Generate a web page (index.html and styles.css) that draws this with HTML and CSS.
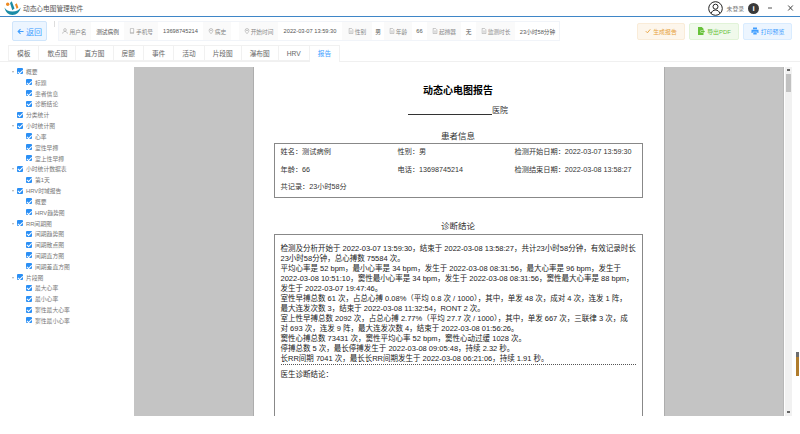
FILE: index.html
```html
<!DOCTYPE html>
<html lang="zh">
<head>
<meta charset="utf-8">
<title>动态心电图管理软件</title>
<link rel="stylesheet" href="styles.css">
</head>
<body>
<svg class="defs" width="0" height="0" aria-hidden="true">
  <symbol id="i-user" viewBox="0 0 8 8"><circle cx="4" cy="2.600" r="1.800" fill="none" stroke="#999" stroke-width=".7"/><path d="M.8 7.500c.3-2 1.600-2.900 3.200-2.900s2.900.9 3.200 2.900" fill="none" stroke="#999" stroke-width=".7"/></symbol>
  <symbol id="i-phone" viewBox="0 0 8 8"><rect x="1.800" y=".5" width="4.400" height="7" rx=".7" fill="none" stroke="#999" stroke-width=".7"/><path d="M1.800 6h4.400" stroke="#999" stroke-width=".6"/></symbol>
  <symbol id="i-pin" viewBox="0 0 8 8"><path d="M4 7.600C2.400 5.800 1.500 4.600 1.500 3.200a2.500 2.500 0 0 1 5 0C6.500 4.600 5.600 5.800 4 7.600z" fill="none" stroke="#999" stroke-width=".7"/><circle cx="4" cy="3.200" r=".8" fill="#999"/></symbol>
  <symbol id="i-doc" viewBox="0 0 8 8"><path d="M1.500.6h3.300l1.700 1.700v5.100h-5z" fill="none" stroke="#999" stroke-width=".7"/><path d="M2.800 4h2.400M2.800 5.500h2.400" stroke="#999" stroke-width=".6"/></symbol>
</svg>
<div class="app">
  <header class="titlebar">
    <div class="brand">
      <svg class="logo" viewBox="0 0 18 16" width="18" height="16"><path d="M.5 7.500c.7 4.500 4 7.500 8 7.500s7.500-3 8.200-7.500c-1.600 2.700-4.200 4-8.200 4s-6.500-1.300-8-4z" fill="#1b8ca6"/><circle cx="3.700" cy="4.300" r="1.700" fill="#ee8a22"/><path d="M7.800 1.200l2.700 7.400-2.200 1.600L6 3z" fill="#1b8ca6"/><path d="M12.800 3.200l1.600 4.400-1.700 1.500-1.700-4.600z" fill="#ee8a22"/></svg>
      <span class="app-name">动态心电图管理软件</span>
    </div>
    <div class="user">
      <svg class="avatar" viewBox="0 0 15 15" width="15" height="15"><circle cx="7.500" cy="7.500" r="6.800" fill="none" stroke="#222" stroke-width="1"/><circle cx="7.500" cy="5.700" r="2.500" fill="none" stroke="#222" stroke-width="1"/><path d="M3.200 12.400c.7-2.400 2.300-3.300 4.300-3.300s3.600.9 4.300 3.300" fill="none" stroke="#222" stroke-width="1"/></svg>
      <span class="login">未登录</span>
      <span class="info">i</span>
      <svg class="winbtn" viewBox="0 0 20 8" width="20" height="8"><path d="M8 4h4" stroke="#555" stroke-width="1"/></svg>
      <svg class="winbtn" viewBox="0 0 20 8" width="20" height="8"><path d="M8.200 1.500l4.600 5M12.800 1.500l-4.600 5" stroke="#444" stroke-width="1"/></svg>
    </div>
  </header>

  <div class="toolbar">
    <button class="back"><svg viewBox="0 0 8 8" width="7" height="7"><path d="M7.500 4H1.500M4 1.300L1.300 4 4 6.700" fill="none" stroke="#409eff" stroke-width="1.300"/></svg>返回</button>
    <span class="sep"></span>
    <div class="desc">
      <span class="k"><svg class="ico"><use href="#i-user"/></svg>用户名</span><span class="v">测试病例</span>
      <span class="k"><svg class="ico"><use href="#i-phone"/></svg>手机号</span><span class="v">13698745214</span>
      <span class="k"><svg class="ico"><use href="#i-pin"/></svg>病史</span><span class="v"></span>
      <span class="k"><svg class="ico"><use href="#i-pin"/></svg>开始时间</span><span class="v">2022-03-07 13:59:30</span>
      <span class="k"><svg class="ico"><use href="#i-doc"/></svg>性别</span><span class="v">男</span>
      <span class="k"><svg class="ico"><use href="#i-doc"/></svg>年龄</span><span class="v">66</span>
      <span class="k"><svg class="ico"><use href="#i-doc"/></svg>起搏器</span><span class="v">无</span>
      <span class="k"><svg class="ico"><use href="#i-doc"/></svg>监测时长</span><span class="v">23小时58分钟</span>
    </div>
    <div class="actions">
      <button class="act orange"><svg viewBox="0 0 8 8" width="6" height="6"><path d="M1 4.200l2.200 2.200L7 1.800" fill="none" stroke="#e6a23c" stroke-width="1.200"/></svg>生成报告</button>
      <button class="act green"><svg viewBox="0 0 8 8" width="8" height="8"><path d="M1 0h3.800L6.500 1.800V3.500H3.500v2h3V8H1z" fill="#67c23a"/><path d="M4 4.100h2.300V3L8 4.500 6.300 6V4.900H4z" fill="#67c23a"/></svg>导出PDF</button>
      <button class="act blue"><svg viewBox="0 0 8 8" width="8" height="8"><path d="M2 .5h4v1.800H2zM.5 2.800h7v3.200H6.300V4.800H1.700V6H.5zM2.300 5.300h3.400v2.300H2.300z" fill="#409eff"/></svg>打印预览</button>
    </div>
  </div>

  <nav class="tabs">
    <span class="tab">模板</span><span class="tab">散点图</span><span class="tab">直方图</span><span class="tab">房颤</span><span class="tab">事件</span><span class="tab">活动</span><span class="tab">片段图</span><span class="tab">瀑布图</span><span class="tab">HRV</span><span class="tab active">报告</span>
  </nav>

  <main class="body">
    <aside class="tree">
      <div class="node"><i class="caret"></i><i class="cb"></i>概要</div>
      <div class="node sub"><i class="cb"></i>标题</div>
      <div class="node sub"><i class="cb"></i>患者信息</div>
      <div class="node sub"><i class="cb"></i>诊断结论</div>
      <div class="node"><i class="caret none"></i><i class="cb"></i>分类统计</div>
      <div class="node"><i class="caret"></i><i class="cb"></i>小时统计图</div>
      <div class="node sub"><i class="cb"></i>心率</div>
      <div class="node sub"><i class="cb"></i>室性早搏</div>
      <div class="node sub"><i class="cb"></i>室上性早搏</div>
      <div class="node"><i class="caret"></i><i class="cb"></i>小时统计数据表</div>
      <div class="node sub"><i class="cb"></i>第1天</div>
      <div class="node"><i class="caret"></i><i class="cb"></i>HRV时域报告</div>
      <div class="node sub"><i class="cb"></i>概要</div>
      <div class="node sub"><i class="cb"></i>HRV趋势图</div>
      <div class="node"><i class="caret"></i><i class="cb"></i>RR间期图</div>
      <div class="node sub"><i class="cb"></i>间期趋势图</div>
      <div class="node sub"><i class="cb"></i>间期散点图</div>
      <div class="node sub"><i class="cb"></i>间期直方图</div>
      <div class="node sub"><i class="cb"></i>间期差直方图</div>
      <div class="node"><i class="caret"></i><i class="cb"></i>片段图</div>
      <div class="node sub"><i class="cb"></i>最大心率</div>
      <div class="node sub"><i class="cb"></i>最小心率</div>
      <div class="node sub"><i class="cb"></i>窦性最大心率</div>
      <div class="node sub"><i class="cb"></i>窦性最小心率</div>
    </aside>

    <section class="viewer">
      <article class="page">
        <h1>动态心电图报告</h1>
        <p class="hospital"><span class="blank-line"></span>医院</p>
        <h2 class="first">患者信息</h2>
        <div class="patient">
          <span>姓名：测试病例</span><span>性别：男</span><span>检测开始日期：2022-03-07 13:59:30</span>
          <span>年龄：66</span><span>电话：13698745214</span><span>检测结束日期：2022-03-08 13:58:27</span>
          <span>共记录：23小时58分</span>
        </div>
        <h2 class="second">诊断结论</h2>
        <div class="conclusion">
          <div class="auto">检测及分析开始于 2022-03-07 13:59:30，结束于 2022-03-08 13:58:27，共计23小时58分钟，有效记录时长<br>
23小时58分钟，总心搏数 75584 次。<br>
平均心率是 52 bpm，最小心率是 34 bpm，发生于 2022-03-08 08:31:56，最大心率是 96 bpm，发生于<br>
2022-03-08 10:51:10，窦性最小心率是 34 bpm，发生于 2022-03-08 08:31:56，窦性最大心率是 88 bpm，<br>
发生于 2022-03-07 19:47:46。<br>
室性早搏总数 61 次，占总心搏 0.08%（平均 0.8 次 / 1000），其中，单发 48 次，成对 4 次，连发 1 阵，<br>
最大连发次数 3，结束于 2022-03-08 11:32:54，RONT 2 次。<br>
室上性早搏总数 2092 次，占总心搏 2.77%（平均 27.7 次 / 1000），其中，单发 667 次，三联律 3 次，成<br>
对 693 次，连发 9 阵，最大连发次数 4，结束于 2022-03-08 01:56:26。<br>
窦性心搏总数 73431 次，窦性平均心率 52 bpm，窦性心动过缓 1028 次。<br>
停搏总数 5 次，最长停搏发生于 2022-03-08 09:05:48，持续 2.32 秒。<br>
长RR间期 7041 次，最长长RR间期发生于 2022-03-08 06:21:06，持续 1.91 秒。</div>
          <div class="doctor">医生诊断结论：</div>
        </div>
      </article>
    </section>
    <div class="vscroll"><span class="up"></span><span class="thumb"></span><span class="down"></span></div>
    <div class="marker-track"><span class="marker"></span></div>
  </main>
</div>
</body>
</html>
```
FILE: styles.css
```css
* { box-sizing: border-box; }
html, body { margin: 0; height: 100%; }
body { background: #fff; font-family: "Liberation Sans", "Noto Sans CJK SC", sans-serif; color: #606266; font-size: 7px; overflow: hidden; }
.defs { position: absolute; }
.app { width: 800px; height: 434px; display: flex; flex-direction: column; }
.titlebar { height: 17px; flex: none; border-bottom: 1px solid #3f86c7; display: flex; justify-content: space-between; align-items: center; }
.brand { display: flex; align-items: center; gap: 1px; padding-left: 4px; }
.app-name { font-size: 6.700px; color: #555; }
.user { display: flex; align-items: center; }
.avatar { margin-right: 4px; }
.login { font-size: 5.800px; color: #777; margin-right: 4px; }
.info { width: 11px; height: 11px; border-radius: 50%; background: #3a3a3a; color: #fff; font-weight: bold; font-size: 8px; text-align: center; line-height: 11px; margin-right: 1px; }
.toolbar { height: 28px; flex: none; display: flex; align-items: center; padding: 0 8px 0 12px; }
button { font-family: inherit; cursor: pointer; }
.back { width: 35px; height: 20px; border: 1px solid #cfe5fb; background: #ecf5ff; color: #409eff; border-radius: 2px; font-size: 8px; padding: 0; display: flex; align-items: center; justify-content: center; gap: 2px; }
.sep { width: 1px; height: 6px; background: #ddd; margin: -14px 3px 0 7px; }
.desc { display: grid; grid-template-columns: 33px 33px 34px 45px 28px 8px 39px 64px 30px 12px 28px 15px 34px 15px 39px 45px; height: 20px; outline: 1px solid #f1f4f9; outline-offset: -1px; font-size: 5.700px; color: #555; }
.k, .v { display: flex; align-items: center; justify-content: center; white-space: nowrap; }
.k { background: #fafafa; color: #888; gap: 1px; }
.ico { width: 6px; height: 6px; flex: none; }
.actions { display: flex; gap: 4px; margin-left: auto; }
.act { height: 17px; border-radius: 2px; font-size: 5.900px; padding: 0; display: flex; align-items: center; justify-content: center; gap: 2px; }
.orange { width: 48px; background: #fdf6ec; border: 1px solid #faecd8; color: #e6a23c; }
.green { width: 50px; background: #f0f9eb; border: 1px solid #e1f3d8; color: #67c23a; }
.blue { width: 49px; background: #ecf5ff; border: 1px solid #d9ecff; color: #409eff; }
.tabs { height: 17px; flex: none; padding-left: 8px; display: flex; border-bottom: 1px solid #f0f0f0; }
.tab { border: 1px solid #f1f1f1; border-left: 0; height: 16px; line-height: 15px; padding: 0 8px; font-size: 6.700px; color: #666; }
.tab:first-child { border-left: 1px solid #f1f1f1; }
.tab.active { color: #409eff; background: #fff; height: 17px; border-bottom: 0; }
.body { flex: 1; display: flex; padding-top: 5px; padding-bottom: 18px; min-height: 0; }
.tree { width: 134px; flex: none; margin-top: -1px; padding-left: 12px; font-size: 5.800px; color: #777; }
.node { height: 10.830px; display: flex; align-items: center; white-space: nowrap; }
.node.sub { padding-left: 14px; }
.caret { width: 0; height: 0; border: 1.500px solid transparent; border-top: 2px solid #aaa; margin-top: 2px; margin-right: 3px; }
.caret.none { border-top-color: transparent; }
.cb { width: 6px; height: 6px; background: #2a8ff5; border-radius: 1px; margin-right: 3px; flex: none; position: relative; }
.cb::after { content: ""; position: absolute; left: 1.500px; top: .5px; width: 2px; height: 3.500px; border: solid #fff; border-width: 0 1px 1px 0; transform: rotate(45deg); }
.viewer { width: 650px; flex: none; background: #c4c4c4; display: flex; justify-content: center; overflow: hidden; border-right: 1px solid #b8b8b8; }
.page { width: 412px; background: #fff; padding: 0 21px 0 20px; color: #222; flex: none; height: 100%; overflow: hidden; border-left: 1px solid #adadad; border-right: 1px solid #adadad; }
h1 { font-size: 10px; text-align: center; margin: 18px 0 0; line-height: 12px; color: #000; }
.hospital { margin: 8px 0 0; text-align: center; font-size: 8px; line-height: 12px; color: #333; }
.blank-line { display: inline-block; width: 84px; border-bottom: 1px solid #333; height: 10px; vertical-align: top; }
h2 { font-weight: normal; font-size: 8.500px; text-align: center; margin: 0; line-height: 12px; color: #333; }
h2.first { margin-top: 13px; }
h2.second { margin-top: 22px; }
.patient { border: 1px solid #888; height: 55px; margin-top: 1px; padding: 3px 6px 0; display: grid; grid-template-columns: 117px 117px 1fr; grid-auto-rows: 17.500px; font-size: 7.200px; line-height: 10px; align-items: start; color: #333; }
.conclusion { border: 1px solid #888; margin-top: 2px; height: 240px; padding: 9px 6px 0; font-size: 7.500px; line-height: 10px; color: #222; white-space: nowrap; }
.auto { border-bottom: 1px dotted #555; }
.doctor { margin-top: 5px; }
.vscroll { width: 7px; flex: none; background: #f1f1f1; margin-left: 1px; display: flex; flex-direction: column; align-items: center; }
.up, .down { width: 7px; height: 7px; position: relative; flex: none; }
.up::after, .down::after { content: ""; position: absolute; left: 2px; top: 2px; width: 3px; height: 2px; background: #666; }
.thumb { width: 5px; height: 18px; background: #c1c1c1; flex: none; }
.down { margin-top: auto; }
.marker-track { flex: 1; position: relative; }
.marker { position: absolute; right: 1px; top: 285px; width: 3px; height: 24px; background: #b07c2c; border-top: 5px solid #6d6d6d; }
```
